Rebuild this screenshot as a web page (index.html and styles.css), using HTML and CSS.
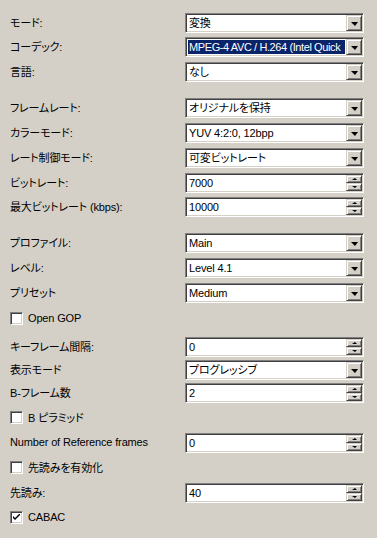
FILE: index.html
```html
<!DOCTYPE html>
<html lang="ja">
<head>
    <meta charset="UTF-8">
    <title>エンコード設定</title>
    <link rel="stylesheet" href="styles.css">
</head>
<body>
    <div class="panel">
        <div class="row">
            <span class="label">モード:</span>
            <div class="field combo"><span class="value">変換</span><span class="drop"></span></div>
        </div>
        <div class="row tight">
            <span class="label">コーデック:</span>
            <div class="field combo"><span class="value selected">MPEG-4 AVC / H.264 (Intel Quick</span><span class="drop"></span></div>
        </div>
        <div class="row">
            <span class="label">言語:</span>
            <div class="field combo"><span class="value">なし</span><span class="drop"></span></div>
        </div>

        <div class="row group">
            <span class="label">フレームレート:</span>
            <div class="field combo"><span class="value">オリジナルを保持</span><span class="drop"></span></div>
        </div>
        <div class="row">
            <span class="label">カラーモード:</span>
            <div class="field combo"><span class="value">YUV 4:2:0, 12bpp</span><span class="drop"></span></div>
        </div>
        <div class="row">
            <span class="label">レート制御モード:</span>
            <div class="field combo"><span class="value">可変ビットレート</span><span class="drop"></span></div>
        </div>
        <div class="row">
            <span class="label">ビットレート:</span>
            <div class="field spin"><span class="value">7000</span><span class="arrows"><span class="up"></span><span class="down"></span></span></div>
        </div>
        <div class="row tight">
            <span class="label">最大ビットレート (kbps):</span>
            <div class="field spin"><span class="value">10000</span><span class="arrows"><span class="up"></span><span class="down"></span></span></div>
        </div>

        <div class="row group">
            <span class="label">プロファイル:</span>
            <div class="field combo"><span class="value">Main</span><span class="drop"></span></div>
        </div>
        <div class="row">
            <span class="label">レベル:</span>
            <div class="field combo"><span class="value">Level 4.1</span><span class="drop"></span></div>
        </div>
        <div class="row">
            <span class="label">プリセット</span>
            <div class="field combo"><span class="value">Medium</span><span class="drop"></span></div>
        </div>
        <div class="row">
            <span class="check"></span><span class="check-text">Open GOP</span>
        </div>
        <div class="row after-check">
            <span class="label">キーフレーム間隔:</span>
            <div class="field spin"><span class="value">0</span><span class="arrows"><span class="up"></span><span class="down"></span></span></div>
        </div>
        <div class="row close">
            <span class="label">表示モード</span>
            <div class="field combo"><span class="value">プログレッシブ</span><span class="drop"></span></div>
        </div>
        <div class="row close">
            <span class="label">B-フレーム数</span>
            <div class="field spin"><span class="value">2</span><span class="arrows"><span class="up"></span><span class="down"></span></span></div>
        </div>
        <div class="row tight">
            <span class="check"></span><span class="check-text">B ピラミッド</span>
        </div>
        <div class="row loose">
            <span class="label">Number of Reference frames</span>
            <div class="field spin"><span class="value">0</span><span class="arrows"><span class="up"></span><span class="down"></span></span></div>
        </div>
        <div class="row tight">
            <span class="check"></span><span class="check-text">先読みを有効化</span>
        </div>
        <div class="row loose">
            <span class="label">先読み:</span>
            <div class="field spin"><span class="value">40</span><span class="arrows"><span class="up"></span><span class="down"></span></span></div>
        </div>
        <div class="row tight">
            <span class="check checked">
                <svg width="7" height="7" viewBox="0 0 7 7"><path d="M0 2 L0 4 L2 6 L7 1 L7 -1 L2 4 Z" fill="#000"/></svg>
            </span><span class="check-text">CABAC</span>
        </div>
    </div>
</body>
</html>
```

FILE: styles.css
```css
body {
    margin: 0;
    background: #d4d0c8;
    font-family: "Liberation Sans", "Noto Sans CJK JP", sans-serif;
    font-size: 11px;
    font-feature-settings: "palt";
    letter-spacing: -0.15px;
    color: #000;
}

.panel {
    display: flex;
    flex-direction: column;
    padding: 13px 0 0 10px;
}

.row {
    display: flex;
    align-items: center;
    height: 20px;
    margin-top: 5px;
}

.row:first-child {
    margin-top: 0;
}

.row.tight {
    margin-top: 4px;
}

.row.close {
    margin-top: 3px;
}

.row.loose {
    margin-top: 6px;
}

.row.after-check {
    margin-top: 9px;
}

.row.group {
    margin-top: 16px;
}

.label {
    width: 175px;
    white-space: nowrap;
    margin-top: -3px;
}

/* sunken 3D box, win2000 style */
.field {
    box-sizing: border-box;
    width: 179px;
    height: 20px;
    display: flex;
    align-items: center;
    background: #fff;
    border: 1px solid;
    border-color: #808080 #fff #fff #808080;
    box-shadow: inset 1px 1px 0 #404040, inset -1px -1px 0 #d4d0c8;
    padding: 1px;
}

.value {
    flex: 1;
    min-width: 0;
    height: 16px;
    line-height: 16px;
    padding-left: 2px;
    white-space: nowrap;
    overflow: hidden;
}

.value.selected {
    background: #0a246a;
    color: #fff;
    margin: 1px;
    height: 14px;
    line-height: 14px;
    padding-left: 1px;
    letter-spacing: -0.4px;
}

.drop {
    box-sizing: border-box;
    width: 16px;
    height: 16px;
    background: #d4d0c8;
    border: 1px solid;
    border-color: #d4d0c8 #404040 #404040 #d4d0c8;
    box-shadow: inset 1px 1px 0 #fff, inset -1px -1px 0 #808080;
    display: flex;
    align-items: center;
    justify-content: center;
}

.drop::after {
    content: "";
    border-left: 4px solid transparent;
    border-right: 3px solid transparent;
    border-top: 4px solid #000;
    margin-top: 1px;
}

.arrows {
    display: flex;
    flex-direction: column;
    width: 16px;
    height: 16px;
}

.arrows span {
    box-sizing: border-box;
    height: 8px;
    background: #d4d0c8;
    border: 1px solid;
    border-color: #d4d0c8 #404040 #404040 #d4d0c8;
    box-shadow: inset 1px 1px 0 #fff, inset -1px -1px 0 #808080;
    display: flex;
    align-items: center;
    justify-content: center;
}

.arrows .up::after {
    content: "";
    border-left: 3px solid transparent;
    border-right: 2px solid transparent;
    border-bottom: 2px solid #000;
}

.arrows .down::after {
    content: "";
    border-left: 3px solid transparent;
    border-right: 2px solid transparent;
    border-top: 2px solid #000;
}

.check {
    box-sizing: border-box;
    width: 13px;
    height: 13px;
    background: #fff;
    border: 1px solid;
    border-color: #808080 #fff #fff #808080;
    box-shadow: inset 1px 1px 0 #404040, inset -1px -1px 0 #d4d0c8;
    display: flex;
    align-items: center;
    justify-content: center;
}

.check-text {
    margin-left: 5px;
}
```
